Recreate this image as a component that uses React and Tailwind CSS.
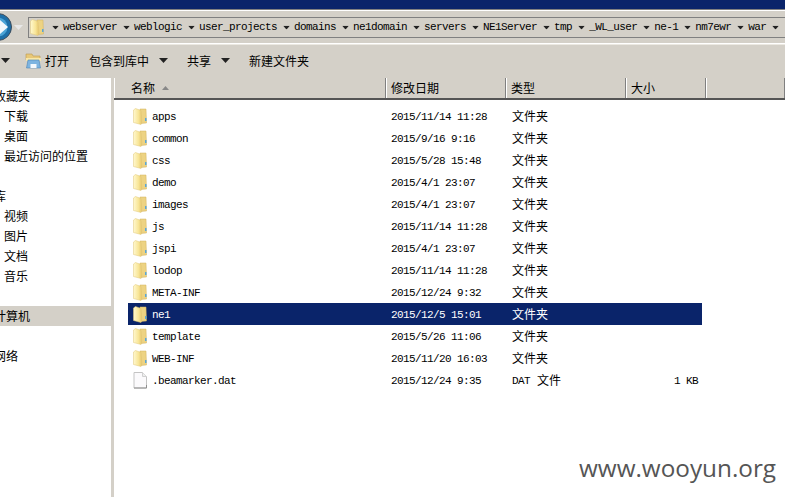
import React from 'react'

const MONO = "font-['Liberation_Mono','Noto_Sans_CJK_SC',monospace] text-[11px] tracking-[-0.6px]"
const CJK = "font-['Noto_Sans_CJK_SC','Liberation_Sans',sans-serif] text-[12px]"

const PATH = ['webserver', 'weblogic', 'user_projects', 'domains', 'ne1domain', 'servers', 'NE1Server', 'tmp', '_WL_user', 'ne-1', 'nm7ewr', 'war']

const FILES = [
  { name: 'apps', date: '2015/11/14 11:28' },
  { name: 'common', date: '2015/9/16 9:16' },
  { name: 'css', date: '2015/5/28 15:48' },
  { name: 'demo', date: '2015/4/1 23:07' },
  { name: 'images', date: '2015/4/1 23:07' },
  { name: 'js', date: '2015/11/14 11:28' },
  { name: 'jspi', date: '2015/4/1 23:07' },
  { name: 'lodop', date: '2015/11/14 11:28' },
  { name: 'META-INF', date: '2015/12/24 9:32' },
  { name: 'ne1', date: '2015/12/5 15:01', selected: true },
  { name: 'template', date: '2015/5/26 11:06' },
  { name: 'WEB-INF', date: '2015/11/20 16:03' },
  { name: '.beamarker.dat', date: '2015/12/24 9:35', file: true },
]

function FolderIcon({ size = 14 }) {
  return (
    <svg width={size} height={size + 3} viewBox="0 0 14 17" className="shrink-0">
      <defs>
        <linearGradient id="fold" x1="0" y1="0" x2="1" y2="0">
          <stop offset="0" stopColor="#fff8cf" />
          <stop offset="0.6" stopColor="#f8e596" />
          <stop offset="1" stopColor="#e3c26a" />
        </linearGradient>
      </defs>
      <path d="M7 1 L13 1 L13.5 15 L7 15.5 Z" fill="#edd383" stroke="#d2b25e" strokeWidth="0.5" />
      <path d="M0.5 2 L2.5 0.5 L8 2.5 L9 15 L8 16.5 L0.5 14.5 Z" fill="url(#fold)" stroke="#e0c677" strokeWidth="0.5" />
      <rect x="12" y="10" width="1.5" height="3" fill="#5aa6d8" />
    </svg>
  )
}

function FileIcon() {
  return (
    <svg width="14" height="17" viewBox="0 0 14 17" className="shrink-0">
      <path d="M1 .5 H9.5 L13.5 4.5 V16 H1 Z" fill="#fbfafc" stroke="#c4c4c4" />
      <path d="M9.5 .5 V4.5 H13.5" fill="#eeeeee" stroke="#d0d0d0" />
      <path d="M1 16 H13.5 V13" fill="none" stroke="#8f8f8f" />
    </svg>
  )
}

function Caret({ color = '#222', className = '' }) {
  return (
    <svg width="9" height="5" viewBox="0 0 9 5" className={`shrink-0 ${className}`}>
      <path d="M0 0 H9 L4.5 5 Z" fill={color} />
    </svg>
  )
}

function BackButton() {
  return (
    <div className="relative w-[13px] h-[30px] shrink-0 overflow-hidden">
      <svg width="30" height="30" viewBox="0 0 30 30" className="absolute -left-[17px] top-0">
        <circle cx="15" cy="15" r="13.5" fill="#1d6fa8" stroke="#3c4c5c" />
        <circle cx="15" cy="15" r="9.5" fill="#4aa3d6" />
        <path d="M17 8 L25 15 L17 22 V18 H9 V12 H17 Z" fill="#f2f8fc" />
      </svg>
    </div>
  )
}

function OpenIcon() {
  return (
    <svg width="17" height="17" viewBox="0 0 17 17" className="shrink-0">
      <path d="M1 2 H7 L8 4 H15 V8 H1 Z" fill="#e8c878" stroke="#b8994e" strokeWidth="0.6" />
      <path d="M1 6 H16 V9 H1 Z" fill="#f8e7a8" />
      <path d="M3 8 H14 L15.5 16 H1.5 Z" fill="#7db4e0" stroke="#4c83b5" strokeWidth="0.6" />
      <path d="M5.5 16 V12 H11.5 V16 Z" fill="#f4f9fd" />
    </svg>
  )
}

function NavRow({ children, active, className = '' }) {
  return (
    <div className={`h-5 flex items-center whitespace-nowrap text-black ${CJK} ${active ? 'bg-[#d4d0c8]' : ''} ${className}`}>
      {children}
    </div>
  )
}

function HeaderCell({ width, children, grow }) {
  return (
    <div className={`h-full flex items-center pl-[4px] border-r border-r-[#808080] border-l border-l-white ${grow ? 'flex-1' : 'shrink-0'}`} style={{ width: grow ? undefined : width }}>
      {children}
    </div>
  )
}

function FileRow({ item }) {
  const text = item.selected ? 'text-white' : 'text-black'
  return (
    <div className={`h-[22px] flex items-center ${item.selected ? 'bg-[#0a246a]' : ''} ${text}`}>
      <div className="w-[24px] pl-[5px] shrink-0 flex items-center">
        {item.file ? <FileIcon /> : <FolderIcon />}
      </div>
      <div className={`w-[239px] shrink-0 pt-[2px] ${MONO}`}>{item.name}</div>
      <div className={`w-[121px] shrink-0 pt-[2px] ${MONO}`}>{item.date}</div>
      <div className="w-[120px] shrink-0 flex items-center">
        {item.file && <span className={`${MONO} pt-[2px] mr-[7px]`}>DAT</span>}
        <span className={CJK}>文件{item.file ? '' : '夹'}</span>
      </div>
      <div className={`w-[66px] shrink-0 pt-[2px] text-right ${MONO}`}>{item.file ? '1 KB' : ''}</div>
    </div>
  )
}

export default function App() {
  return (
    <div className="relative w-[785px] h-[497px] overflow-hidden bg-white flex flex-col">
      <div className="h-[9px] shrink-0 bg-[#0a246a]" />
      <div className="h-px shrink-0 bg-[#808080]" />
      <div className="h-[34px] shrink-0 bg-[#d4d0c8] border-t border-t-white border-b border-b-white flex items-center">
        <BackButton />
        <Caret color="#e8e8e8" className="ml-[1px] mr-[5px]" />
        <div className="flex-1 h-[21px] bg-[#d4d0c8] border-y border-y-[#808080] border-l border-l-[#808080] flex items-center overflow-hidden">
          <div className="w-[16px] ml-[1px] shrink-0"><FolderIcon /></div>
          <div className="flex items-center whitespace-nowrap text-black">
            {PATH.map(p => (
              <React.Fragment key={p}>
                <Caret className="scale-75 ml-[5px] mr-[3px]" />
                <span className={MONO}>{p}</span>
              </React.Fragment>
            ))}
            <Caret className="scale-75 ml-[5px]" />
          </div>
        </div>
      </div>
      <div className="h-[34px] pb-[2px] shrink-0 bg-[#d4d0c8] border-t border-t-[#ece9e2] flex items-center text-black">
        <Caret className="ml-[1px] mr-[15px]" />
        <OpenIcon />
        <span className={`${CJK} ml-[3px] mr-[20px]`}>打开</span>
        <span className={`${CJK} mr-[10px]`}>包含到库中</span>
        <Caret className="mr-[19px]" />
        <span className={`${CJK} mr-[10px]`}>共享</span>
        <Caret className="mr-[19px]" />
        <span className={CJK}>新建文件夹</span>
      </div>
      <div className="flex-1 flex min-h-0">
        <div className="w-[111px] shrink-0 pt-[8px]">
          <NavRow className="-ml-[6px]">收藏夹</NavRow>
          <NavRow className="pl-[4px]">下载</NavRow>
          <NavRow className="pl-[4px]">桌面</NavRow>
          <NavRow className="pl-[4px]">最近访问的位置</NavRow>
          <div className="h-5" />
          <NavRow className="-ml-[6px]">库</NavRow>
          <NavRow className="pl-[4px]">视频</NavRow>
          <NavRow className="pl-[4px]">图片</NavRow>
          <NavRow className="pl-[4px]">文档</NavRow>
          <NavRow className="pl-[4px]">音乐</NavRow>
          <div className="h-5" />
          <NavRow active className="-ml-[6px]">计算机</NavRow>
          <div className="h-5" />
          <NavRow className="-ml-[6px]">网络</NavRow>
        </div>
        <div className="w-[3px] shrink-0 bg-[#d4d0c8]" />
        <div className="flex-1 min-w-0 flex flex-col">
          <div className={`h-[22px] shrink-0 bg-[#d4d0c8] border-b-2 border-b-[#555] flex text-black ${CJK}`}>
            <HeaderCell width={272}>
              <span className="ml-[12px] mr-[7px]">名称</span>
              <svg width="7" height="4" viewBox="0 0 7 4"><path d="M0 4 H7 L3.5 0 Z" fill="#888" /></svg>
            </HeaderCell>
            <HeaderCell width={120}>修改日期</HeaderCell>
            <HeaderCell width={120}>类型</HeaderCell>
            <HeaderCell width={80}>大小</HeaderCell>
            <HeaderCell grow />
          </div>
          <div className="pl-[14px] pt-[5px] w-[588px]">
            {FILES.map(f => <FileRow key={f.name} item={f} />)}
          </div>
        </div>
      </div>
      <div className="absolute left-[579px] top-[451px] font-['Open_Sans',sans-serif] text-[24.3px] leading-[34px] text-[#555]">www.wooyun.org</div>
    </div>
  )
}
